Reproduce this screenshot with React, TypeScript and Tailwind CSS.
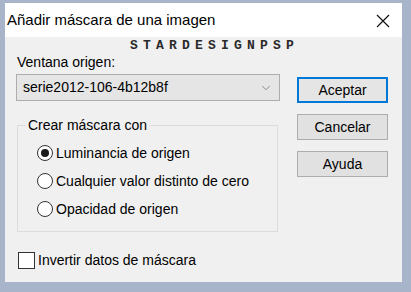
import { ChevronDown } from "lucide-react";

const font = { fontFamily: '"Liberation Sans", Arial, sans-serif' };

function Radio({ label, checked }: { label: string; checked?: boolean }) {
  return (
    <div className="flex h-[28px] items-center">
      <span className="ml-[19px] flex h-[16px] w-[16px] items-center justify-center rounded-full border-[1.5px] border-[#333] bg-white">
        {checked && <span className="h-[8px] w-[8px] rounded-full bg-[#1a1a1a]" />}
      </span>
      <span className="ml-[3px] text-[14px] leading-[16px] text-black">{label}</span>
    </div>
  );
}

function DialogButton({ label, primary }: { label: string; primary?: boolean }) {
  return (
    <button
      className={
        primary
          ? "flex h-[26px] w-[91px] items-center justify-center border-2 border-[#0078d7] bg-[#e5e5e5] text-[14px] text-black"
          : "flex h-[26px] w-[91px] items-center justify-center border border-[#adadad] bg-[#e1e1e1] text-[14px] text-black"
      }
    >
      {label}
    </button>
  );
}

export default function App() {
  return (
    <div
      className="flex h-[292px] w-[411px] flex-col bg-[#a7b4ca] pt-[3px] pr-[9px] pb-[10px] pl-[5px]"
      style={font}
    >
      {/* title bar */}
      <div className="flex h-[34px] shrink-0 items-center justify-between bg-white pl-[2px] pr-[12px]">
        <span className="text-[15px] leading-[18px] text-black">Añadir máscara de una imagen</span>
        <svg width="14" height="14" viewBox="0 0 14 14" className="mt-[2px]">
          <path d="M1 1 L13 13 M13 1 L1 13" stroke="#111" strokeWidth="1.2" />
        </svg>
      </div>

      {/* body */}
      <div className="flex flex-1 flex-col bg-[#f0f0f0] pt-[2px]">
        <div
          className="ml-[125px] h-[15px] text-[13px] font-bold leading-[14px] tracking-[5.2px] text-[#2a2a2a]"
          style={{ fontFamily: '"Liberation Mono", monospace' }}
        >
          STARDESIGNPSP
        </div>

        <div className="flex">
          <div className="ml-[11px] flex w-[264px] flex-col">
            <div className="pl-[1px] text-[14px] leading-[17px] text-black">Ventana origen:</div>
            <div className="mt-[3px] flex h-[27px] items-center justify-between border border-[#adadad] bg-[#e5e5e5] pl-[6px] pr-[6px]">
              <span className="text-[14px] text-black">serie2012-106-4b12b8f</span>
              <ChevronDown size={14} strokeWidth={1.2} color="#666" />
            </div>

            <div className="relative mt-[24px] ml-[1px] h-[107px] w-[261px] border border-[#dcdcdc] pt-[13px]">
              <span className="absolute -top-[9px] left-[8px] bg-[#f0f0f0] px-[2px] text-[14px] leading-[16px] text-black">
                Crear máscara con
              </span>
              <Radio label="Luminancia de origen" checked />
              <Radio label="Cualquier valor distinto de cero" />
              <Radio label="Opacidad de origen" />
            </div>

            <div className="mt-[18px] flex h-[20px] items-center">
              <span className="ml-[2px] h-[17px] w-[17px] border border-[#333] bg-white" />
              <span className="ml-[3px] text-[14px] leading-[16px] text-black">Invertir datos de máscara</span>
            </div>
          </div>

          <div className="ml-[17px] mt-[23px] flex flex-col gap-[11px]">
            <DialogButton label="Aceptar" primary />
            <DialogButton label="Cancelar" />
            <DialogButton label="Ayuda" />
          </div>
        </div>
      </div>
    </div>
  );
}
